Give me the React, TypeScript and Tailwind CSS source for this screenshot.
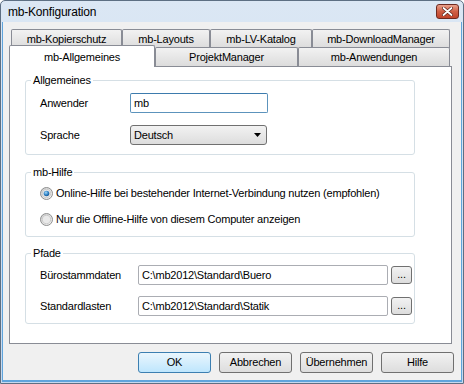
import React from "react";

const font = { fontFamily: '"Liberation Sans", Arial, sans-serif' };

function Tab({ label, w, selected = false }: { label: string; w: string; selected?: boolean }) {
  if (selected) {
    return (
      <div
        className={`${w} relative z-10 -mt-[2px] -mb-px flex h-[22px] items-start justify-center rounded-t-[2px] border border-b-0 border-[#898c95] bg-white pt-[3px]`}
      >
        {label}
      </div>
    );
  }
  return (
    <div
      className={`${w} flex h-[19px] items-center justify-center rounded-t-[2px] border border-b-0 border-[#898c95] bg-gradient-to-b from-[#f2f2f2] to-[#dcdcdc]`}
    >
      {label}
    </div>
  );
}

function Group({ title, h, className = "", children }: { title: string; h: string; className?: string; children: React.ReactNode }) {
  return (
    <div className={`relative w-[390px] ${h} rounded-[3px] border border-[#d5dfe5] ${className}`}>
      {/* legend over the border */}
      <span className="absolute -top-[7px] left-[5px] bg-white px-[2px] leading-[13px]">{title}</span>
      {children}
    </div>
  );
}

function TextBox({ value, w, focus = false }: { value: string; w: string; focus?: boolean }) {
  return (
    <div
      className={`${w} flex h-[20px] items-center rounded-[2px] border bg-white pl-[3px] ${
        focus ? "border-[#5c93bc] border-t-[#3d7bad]" : "border-[#abadb3] border-t-[#abadb3]"
      }`}
    >
      {value}
    </div>
  );
}

function Radio({ checked }: { checked: boolean }) {
  return (
    <svg width="13" height="13" viewBox="0 0 13 13">
      <defs>
        <linearGradient id="rb" x1="0" y1="0" x2="1" y2="1">
          <stop offset="0" stopColor="#cbcbcb" />
          <stop offset="1" stopColor="#f7f7f7" />
        </linearGradient>
        <radialGradient id="rd" cx="0.4" cy="0.35" r="0.7">
          <stop offset="0" stopColor="#a6d8f7" />
          <stop offset="0.6" stopColor="#2a7fc4" />
          <stop offset="1" stopColor="#1b4f86" />
        </radialGradient>
      </defs>
      <circle cx="6.5" cy="6.5" r="6" fill="url(#rb)" stroke="#8e8f8f" strokeWidth="1" />
      <circle cx="6.5" cy="6.5" r="4.2" fill="#e9e9e9" stroke="#c4c4c4" strokeWidth="0.8" />
      {checked && <circle cx="6.5" cy="6.5" r="2.8" fill="url(#rd)" />}
    </svg>
  );
}

function Button({ label, primary = false }: { label: string; primary?: boolean }) {
  return (
    <div
      className={`flex h-[21px] w-[73px] items-center justify-center rounded-[3px] border ${
        primary
          ? "border-[#3c7fb1] bg-gradient-to-b from-[#eaf6fd] to-[#bee6fd]"
          : "border-[#707070] bg-gradient-to-b from-[#f2f2f2] to-[#dddddd]"
      }`}
    >
      {label}
    </div>
  );
}

export default function App() {
  return (
    <div
      style={font}
      className="flex h-[384px] w-[464px] flex-col overflow-hidden rounded-t-[5px] border border-[#5d6f83] bg-gradient-to-b from-[#dbe7f4] to-[#c6d9ee] text-[11px] tracking-[-0.2px] text-black"
    >
      {/* Title bar */}
      <div className="flex h-[21px] shrink-0 items-center justify-between pl-[7px] pr-[4px]">
        <span className="text-[12px] leading-none">mb-Konfiguration</span>
        <div className="-mt-[1px] flex h-[15px] w-[23px] items-center justify-center rounded-[3px] border border-[#6e2a20] bg-gradient-to-b from-[#e8a08b] via-[#cf5f45] to-[#c0432a]">
          <svg width="11" height="9" viewBox="0 0 11 9">
            <path d="M1.5 1 L9.5 8 M9.5 1 L1.5 8" stroke="#5a2016" strokeWidth="3.2" strokeLinecap="round" />
            <path d="M1.5 1 L9.5 8 M9.5 1 L1.5 8" stroke="#ffffff" strokeWidth="1.8" strokeLinecap="round" />
          </svg>
        </div>
      </div>

      {/* Client area */}
      <div className="mx-[1px] mb-[1px] flex flex-1 flex-col border-x-[1px] border-b-[2px] border-[#5fa4dc] bg-[#f0f0f0] pl-[6px] pt-[7px]">
        {/* Tabs */}
        <div className="ml-[2px] flex">
          <Tab label="mb-Kopierschutz" w="w-[111px]" />
          <Tab label="mb-Layouts" w="w-[88px]" />
          <Tab label="mb-LV-Katalog" w="w-[102px]" />
          <Tab label="mb-DownloadManager" w="w-[138px]" />
        </div>
        <div className="-mt-px flex h-[19px] items-end">
          <Tab label="mb-Allgemeines" w="w-[146px]" selected />
          <Tab label="ProjektManager" w="w-[143px]" />
          <Tab label="mb-Anwendungen" w="w-[152px]" />
        </div>

        {/* Panel */}
        <div className="flex h-[278px] w-[443px] flex-col border border-[#898c95] bg-white pl-[15px] pt-[13px]">
          <Group title="Allgemeines" h="h-[75px]">
            <div className="flex flex-col gap-[12px] pt-[12px]">
              <div className="flex items-center">
                <span className="w-[104px] pl-[14px]">Anwender</span>
                <TextBox value="mb" w="w-[138px]" focus />
              </div>
              <div className="flex items-center">
                <span className="w-[104px] pl-[14px]">Sprache</span>
                <div className="flex h-[20px] w-[137px] items-center justify-between rounded-[3px] border border-[#707070] bg-gradient-to-b from-[#f2f2f2] to-[#dddddd] pl-[3px] pr-[5px]">
                  <span>Deutsch</span>
                  <svg width="7" height="4" viewBox="0 0 7 4">
                    <path d="M0 0 H7 L3.5 4 Z" fill="#000" />
                  </svg>
                </div>
              </div>
            </div>
          </Group>

          <Group title="mb-Hilfe" h="h-[65px]" className="mt-[17px]">
            <div className="flex flex-col gap-[10px] pl-[14px] pt-[12px]">
              <div className="flex h-[16px] items-center gap-[3px]">
                <Radio checked />
                <span>Online-Hilfe bei bestehender Internet-Verbindung nutzen (empfohlen)</span>
              </div>
              <div className="flex h-[16px] items-center gap-[3px]">
                <Radio checked={false} />
                <span>Nur die Offline-Hilfe von diesem Computer anzeigen</span>
              </div>
            </div>
          </Group>

          <Group title="Pfade" h="h-[71px]" className="mt-[16px]">
            <div className="flex flex-col gap-[11px] pt-[11px]">
              {[
                ["Bürostammdaten", "C:\\mb2012\\Standard\\Buero"],
                ["Standardlasten", "C:\\mb2012\\Standard\\Statik"],
              ].map(([label, path]) => (
                <div key={label} className="flex items-center">
                  <span className="w-[112px] pl-[14px]">{label}</span>
                  <TextBox value={path} w="w-[250px]" />
                  <div className="ml-[3px] flex h-[18px] w-[21px] items-end justify-center rounded-[3px] border border-[#707070] bg-gradient-to-b from-[#f2f2f2] to-[#dddddd] pb-[3px] leading-none">
                    ...
                  </div>
                </div>
              ))}
            </div>
          </Group>
        </div>

        {/* Dialog buttons */}
        <div className="mt-[8px] flex gap-[8px] pl-[129px]">
          <Button label="OK" primary />
          <Button label="Abbrechen" />
          <Button label="Übernehmen" />
          <Button label="Hilfe" />
        </div>
      </div>
    </div>
  );
}
